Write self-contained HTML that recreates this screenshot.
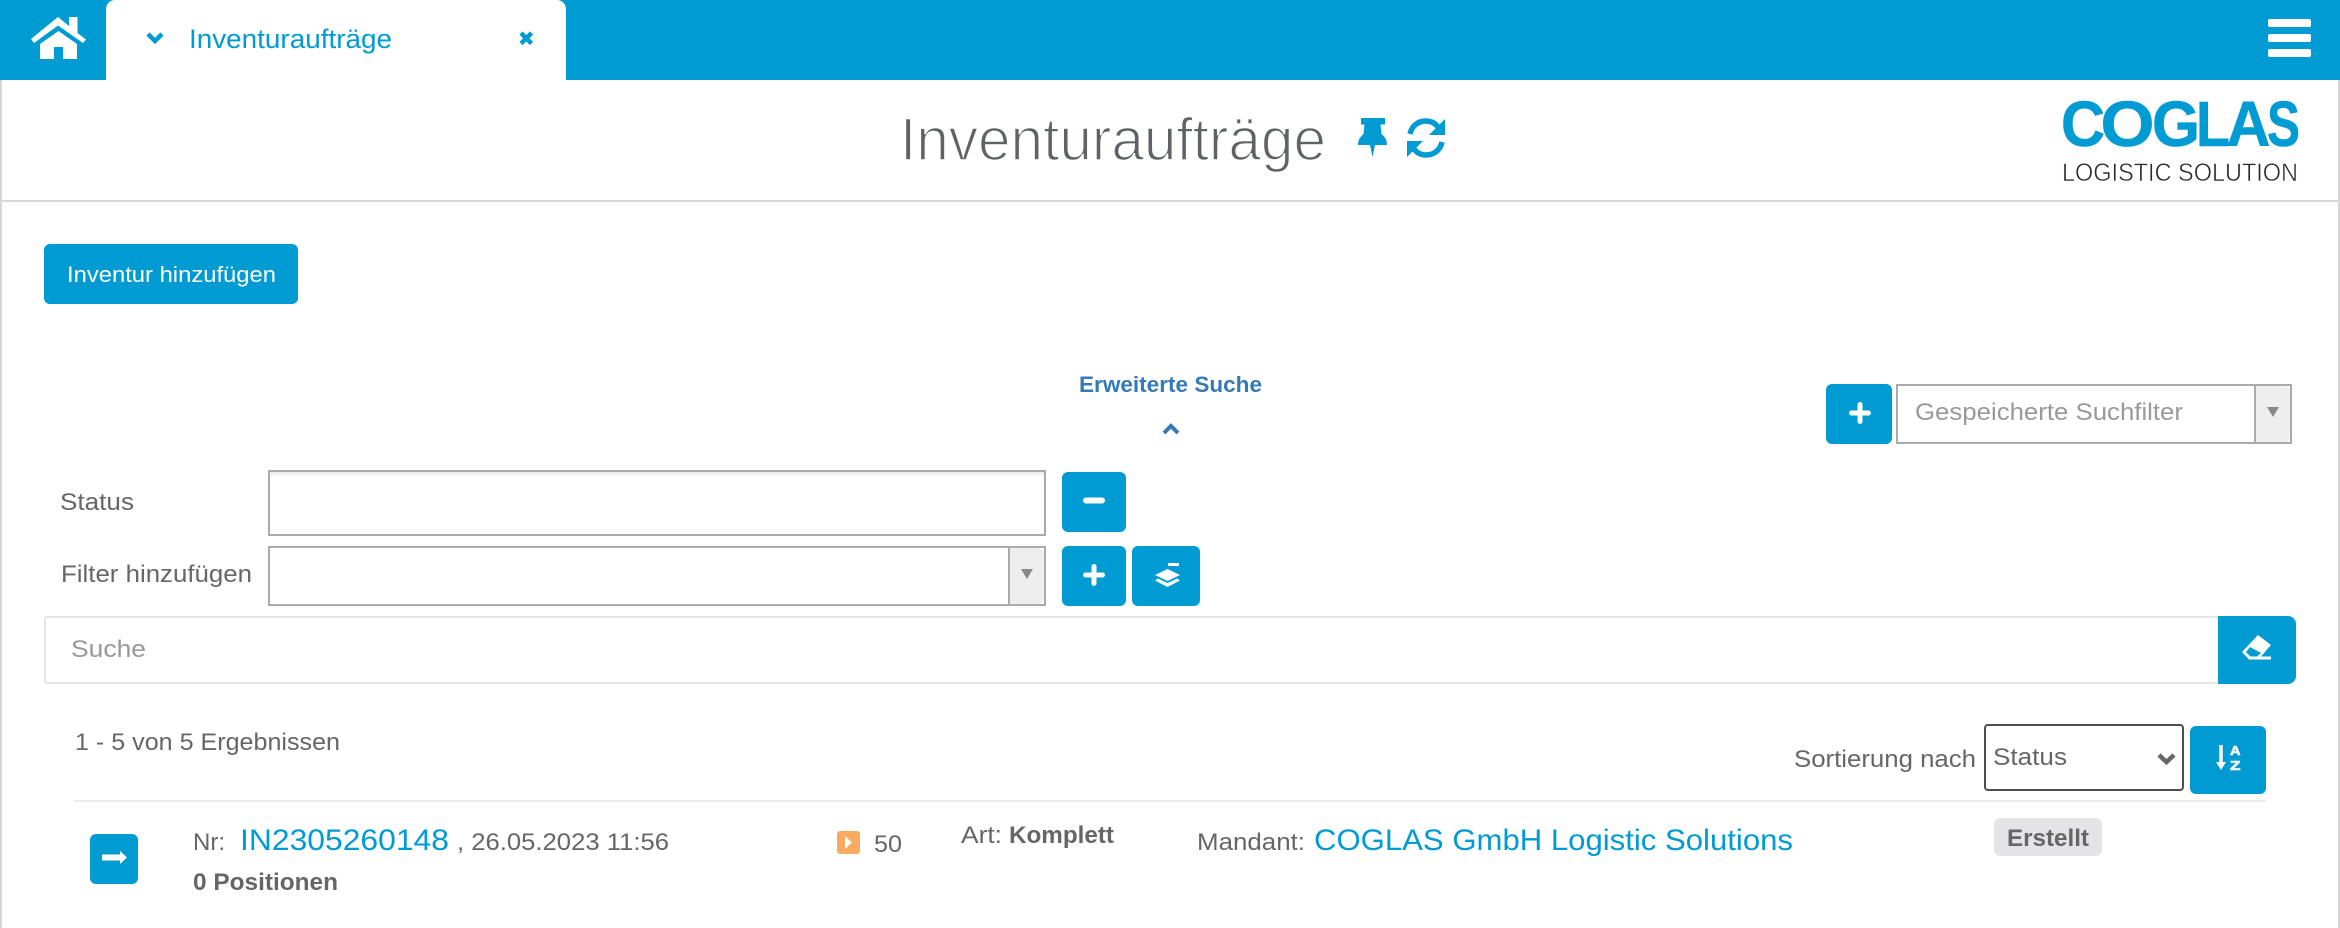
<!DOCTYPE html>
<html lang="de">
<head>
<meta charset="utf-8">
<title>Inventuraufträge</title>
<style>
html,body{margin:0;padding:0;background:#fff;}
body{position:relative;width:2340px;height:928px;overflow:hidden;font-family:"Liberation Sans",sans-serif;color:#666;}
.b{position:absolute;box-sizing:border-box;}
.blue{background:#009bd3;border-radius:6px;}
.sel{border:2px solid #aaa;background:#fff;}
.arrow{position:absolute;top:0;bottom:0;right:0;width:36px;background:#eee;border-left:2px solid #aaa;border-radius:0 6px 6px 0;box-sizing:border-box;}
.tri{position:absolute;left:11px;width:0;height:0;border-left:6px solid transparent;border-right:6px solid transparent;border-top:10px solid #888;}
svg{position:absolute;left:0;top:0;}
text{font-family:"Liberation Sans",sans-serif;fill:#666;}
.bd{font-weight:bold;}
.bl{fill:#009bd3;}
.lg{font-size:64px;font-weight:bold;fill:#009bd3;stroke:#009bd3;stroke-width:.6px;}
</style>
</head>
<body>
<div class="b" style="left:0;top:0;width:2340px;height:80px;background:#009bd3;"></div>
<div class="b" style="left:106px;top:0;width:460px;height:80px;background:#fff;border-radius:9px 9px 0 0;"></div>
<div class="b" style="left:0;top:80px;width:2px;height:848px;background:#d6d6d6;"></div>
<div class="b" style="right:0;top:80px;width:2px;height:848px;background:#d6d6d6;"></div>
<div class="b" style="left:0;top:200px;width:2340px;height:2px;background:#d8d8d8;"></div>

<div class="b blue" style="left:44px;top:244px;width:254px;height:60px;"></div>
<div class="b blue" style="left:1826px;top:384px;width:66px;height:60px;"></div>
<div class="b sel" style="left:1896px;top:384px;width:396px;height:60px;"><div class="arrow"><div class="tri" style="top:21px;"></div></div></div>

<div class="b sel" style="left:268px;top:470px;width:778px;height:66px;box-shadow:inset 0 6px 6px -5px rgba(0,0,0,.14);"></div>
<div class="b blue" style="left:1062px;top:472px;width:64px;height:60px;"></div>
<div class="b sel" style="left:268px;top:546px;width:778px;height:60px;"><div class="arrow"><div class="tri" style="top:21px;"></div></div></div>
<div class="b blue" style="left:1062px;top:546px;width:64px;height:60px;"></div>
<div class="b blue" style="left:1132px;top:546px;width:68px;height:60px;"></div>

<div class="b" style="left:44px;top:616px;width:2176px;height:68px;border:2px solid #e5e5e5;border-radius:3px 0 0 3px;"></div>
<div class="b" style="left:2218px;top:616px;width:78px;height:68px;background:#009bd3;border-radius:0 8px 8px 0;"></div>

<div class="b" style="left:1984px;top:724px;width:200px;height:67px;border:2px solid #4d4d4d;border-radius:4px;"></div>
<div class="b blue" style="left:2190px;top:726px;width:76px;height:68px;"></div>
<div class="b" style="left:74px;top:800px;width:2192px;height:2px;background:#e9ebee;"></div>
<div class="b blue" style="left:90px;top:834px;width:48px;height:50px;"></div>
<div class="b" style="left:837px;top:831px;width:23px;height:23px;background:#f8ab5e;border-radius:3px;"></div>
<div class="b" style="left:1994px;top:818px;width:108px;height:38px;background:#e4e4e7;border-radius:6px;"></div>

<svg width="2340" height="928" viewBox="0 0 2340 928">
  <!-- home -->
  <path d="M31 39L58 17L69 26V17H77.500V33L86 39.500L83 43L58 25.500L34 43z" fill="#fff"/>
  <path d="M40 59V44L58.500 31L77 44V59H63V47H54V59z" fill="#fff"/>
  <!-- tab icons -->
  <path d="M148 34l7 7l7-7" fill="none" stroke="#009bd3" stroke-width="4.500"/>
  <path d="M521 33l10.500 10.500M531.500 33l-10.500 10.500" fill="none" stroke="#009bd3" stroke-width="4.500"/>
  <text x="189" y="48" font-size="27" textLength="203" lengthAdjust="spacingAndGlyphs" class="bl">Inventuraufträge</text>
  <!-- hamburger -->
  <g fill="#fff"><rect x="2268" y="19" width="43" height="8" rx="2"/><rect x="2268" y="34" width="43" height="8" rx="2"/><rect x="2268" y="49" width="43" height="8" rx="2"/></g>

  <!-- title -->
  <text x="900" y="160" font-size="60" textLength="426" lengthAdjust="spacingAndGlyphs" style="fill:#5f6366;stroke:#fff;stroke-width:1.600px">Inventuraufträge</text>
  <path d="M1361 118H1385V124.500H1380.500L1381.500 134C1385 137 1387 140 1387 145H1375L1372.500 157L1370 145H1358C1358 140 1360 137 1363.500 134L1364.500 124.500H1361z" fill="#009bd3"/>
  <path d="M1410 134C1412 125 1419 121 1426 121C1431 121 1435 123 1438 127" fill="none" stroke="#009bd3" stroke-width="5.500"/>
  <path d="M1445 119V135H1429z" fill="#009bd3"/>
  <path d="M1442 142C1440 151 1433 155 1426 155C1421 155 1417 153 1414 149" fill="none" stroke="#009bd3" stroke-width="5.500"/>
  <path d="M1407 157V141H1423z" fill="#009bd3"/>

  <!-- logo -->
  <text class="lg" x="2061" y="146" textLength="44" lengthAdjust="spacingAndGlyphs">C</text>
  <text class="lg" x="2100.500" y="146" textLength="54" lengthAdjust="spacingAndGlyphs">O</text>
  <text class="lg" x="2152" y="146" textLength="48" lengthAdjust="spacingAndGlyphs">G</text>
  <text class="lg" x="2196" y="146" textLength="34" lengthAdjust="spacingAndGlyphs">L</text>
  <text class="lg" x="2226.500" y="146" textLength="44" lengthAdjust="spacingAndGlyphs">A</text>
  <text class="lg" x="2267" y="146" textLength="33" lengthAdjust="spacingAndGlyphs">S</text>
  <text x="2062" y="181" font-size="25" textLength="236" lengthAdjust="spacingAndGlyphs" style="fill:#2e2a28;stroke:#fff;stroke-width:.5px">LOGISTIC SOLUTION</text>

  <text x="67" y="282" font-size="22" textLength="209" lengthAdjust="spacingAndGlyphs" style="fill:#fff">Inventur hinzufügen</text>
  <text x="1079" y="392" font-size="22" class="bd" textLength="183" lengthAdjust="spacingAndGlyphs" style="fill:#337ab7">Erweiterte Suche</text>
  <path d="M1164 433l7-7l7 7" fill="none" stroke="#337ab7" stroke-width="4"/>

  <path d="M1860 404.500V421.500M1851.500 413H1868.500" stroke="#fff" stroke-width="5" stroke-linecap="round"/>
  <text x="1915" y="420" font-size="24" textLength="268" lengthAdjust="spacingAndGlyphs" style="fill:#999">Gespeicherte Suchfilter</text>

  <text x="60" y="510" font-size="24" textLength="74" lengthAdjust="spacingAndGlyphs">Status</text>
  <text x="61" y="582" font-size="24" textLength="191" lengthAdjust="spacingAndGlyphs">Filter hinzufügen</text>
  <path d="M1086 500.500H1102" stroke="#fff" stroke-width="6" stroke-linecap="round"/>
  <path d="M1094 566.500V583.500M1085.500 575H1102.500" stroke="#fff" stroke-width="5" stroke-linecap="round"/>
  <!-- layers -->
  <g fill="#fff">
    <rect x="1168" y="563" width="11" height="3"/>
    <path d="M1167.500 569L1180 575L1167.500 581L1155 575z"/>
    <path d="M1158 578.500L1167.500 583L1177 578.500L1180 580.500L1167.500 587L1155 580.500z"/>
  </g>
  <text x="71" y="657" font-size="24" textLength="75" lengthAdjust="spacingAndGlyphs" style="fill:#999">Suche</text>
  <!-- eraser -->
  <path fill-rule="evenodd" d="M2258 635L2271 645L2261 656.500H2271V659.500H2249L2242 652zM2250 647L2261 653L2257 656.500H2250.500L2246 652z" fill="#fff"/>

  <text x="75" y="750" font-size="24" textLength="265" lengthAdjust="spacingAndGlyphs">1 - 5 von 5 Ergebnissen</text>
  <text x="1794" y="767" font-size="24" textLength="182" lengthAdjust="spacingAndGlyphs">Sortierung nach</text>
  <text x="1993" y="765" font-size="24" textLength="74" lengthAdjust="spacingAndGlyphs">Status</text>
  <path d="M2159 755L2166.500 762L2174 755" fill="none" stroke="#666" stroke-width="4.500"/>
  <!-- sort -->
  <path d="M2221 745V764" stroke="#fff" stroke-width="3.500"/>
  <path d="M2216 762H2226L2221 770z" fill="#fff"/>
  <text x="2230" y="755" font-size="13" class="bd" textLength="10.500" lengthAdjust="spacingAndGlyphs" style="fill:#fff;stroke:#fff;stroke-width:.6px">A</text>
  <text x="2230" y="770" font-size="13" class="bd" textLength="10.500" lengthAdjust="spacingAndGlyphs" style="fill:#fff;stroke:#fff;stroke-width:.6px">Z</text>

  <path d="M102 854.500H120V851L127 857.500L120 864V860.500H102z" fill="#fff"/>
  <text x="193" y="850" font-size="24" textLength="32" lengthAdjust="spacingAndGlyphs">Nr:</text>
  <text x="240" y="850" font-size="30" textLength="209" lengthAdjust="spacingAndGlyphs" class="bl">IN2305260148</text>
  <text x="457" y="850" font-size="24" textLength="212" lengthAdjust="spacingAndGlyphs">, 26.05.2023 11:56</text>
  <text x="193" y="890" font-size="24" class="bd" textLength="145" lengthAdjust="spacingAndGlyphs">0 Positionen</text>

  <path d="M845 836L852 842.500L845 849z" fill="#fff"/>
  <text x="874" y="852" font-size="24" textLength="28" lengthAdjust="spacingAndGlyphs">50</text>
  <text x="961" y="843" font-size="24" textLength="41" lengthAdjust="spacingAndGlyphs">Art:</text>
  <text x="1009" y="843" font-size="24" class="bd" textLength="105" lengthAdjust="spacingAndGlyphs">Komplett</text>
  <text x="1197" y="850" font-size="24" textLength="108" lengthAdjust="spacingAndGlyphs">Mandant:</text>
  <text x="1314" y="850" font-size="30" textLength="479" lengthAdjust="spacingAndGlyphs" class="bl">COGLAS GmbH Logistic Solutions</text>
  <text x="2007" y="846" font-size="24" class="bd" textLength="82" lengthAdjust="spacingAndGlyphs">Erstellt</text>
</svg>
</body>
</html>
